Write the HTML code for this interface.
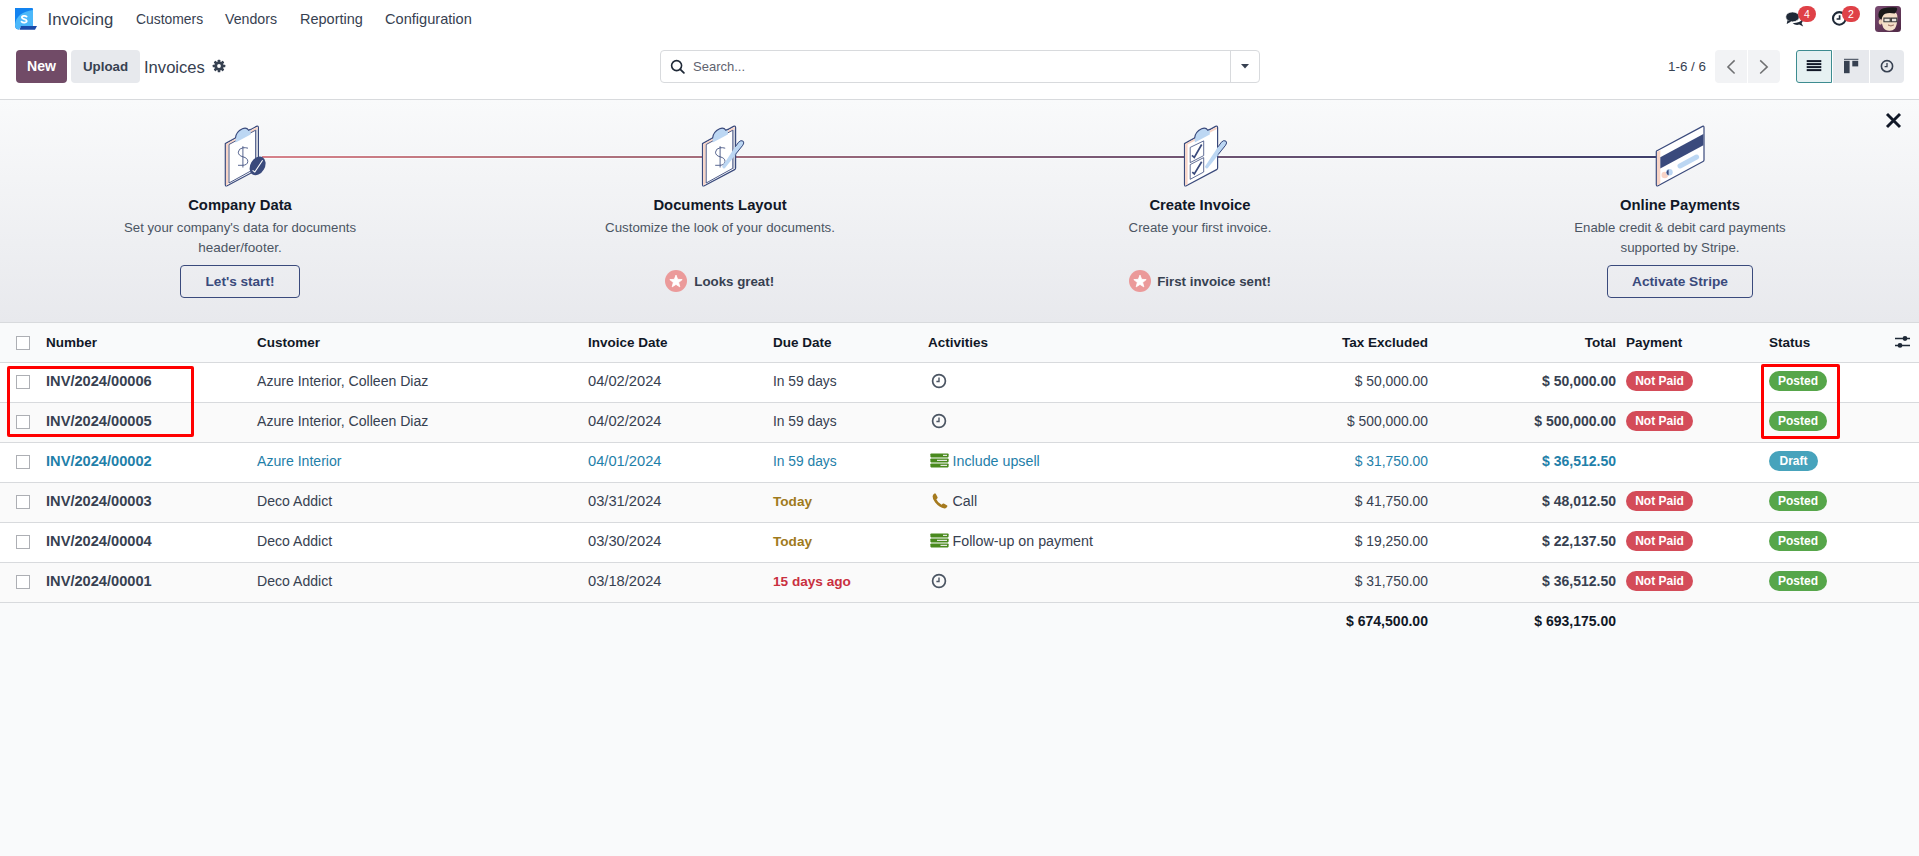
<!DOCTYPE html>
<html><head><meta charset="utf-8"><title>Invoices</title>
<style>
html,body{margin:0;padding:0;}
body{width:1919px;height:856px;position:relative;overflow:hidden;background:#f9fafb;font-family:'Liberation Sans', sans-serif;}
.t{position:absolute;white-space:nowrap;font-family:'Liberation Sans', sans-serif;}
</style></head><body>
<div style="position:absolute;left:0;top:0;width:1919px;height:100px;background:#fff"></div>
<svg style="position:absolute;left:15px;top:8px" width="23" height="23" viewBox="0 0 23 23">
<path d="M0,0 H17 Q18,0 18,1 V18 H8 Q5,18 4,21.6 Q0,21 0,18 Z" fill="#1283f0"/>
<path d="M0,16 Q2,4 18,2 V18 H8 Q5,18 4,21.6 Q0,21 0,17 Z" fill="#4cb8fa"/>
<path d="M6,18 H22 L20,21.8 H4.5 Z" fill="#1a4aa8"/>
<path d="M11.6,8.6 C10.4,7.5 6.8,7.6 6.9,9.6 C7.1,11.3 11.5,10.9 11.7,12.9 C11.9,14.9 7.9,15.1 6.5,13.7" fill="none" stroke="#fff" stroke-width="1.8" stroke-linecap="round"/>
</svg>
<div class="t" style="left:47.5px;top:12px;font-size:16.7px;line-height:16.7px;color:#374151;">Invoicing</div>
<div class="t" style="left:136px;top:13px;font-size:13.9px;line-height:13.9px;color:#374151;">Customers</div>
<div class="t" style="left:225px;top:12px;font-size:14.2px;line-height:14.2px;color:#374151;">Vendors</div>
<div class="t" style="left:300px;top:12px;font-size:14.5px;line-height:14.5px;color:#374151;">Reporting</div>
<div class="t" style="left:385px;top:12px;font-size:14.6px;line-height:14.6px;color:#374151;">Configuration</div>
<svg style="position:absolute;left:1785px;top:10px" width="20" height="18" viewBox="0 0 20 18">
<path d="M7.6,13.2 Q10.5,15.6 14.2,14.6 L18.2,16.4 L16.6,13.2 Q18.6,11.2 17.6,8.6 Q15.4,13.2 7.6,13.2 Z" fill="#1f2937"/>
<ellipse cx="7.5" cy="6.9" rx="6.8" ry="5" fill="#1f2937" stroke="#fff" stroke-width="0.8"/>
<path d="M2.6,10.2 L1.6,14 L6.4,11.6 Z" fill="#1f2937"/>
</svg>
<div style="position:absolute;left:1798px;top:6px;width:18px;height:16px;border-radius:8px;background:#df4147;color:#fff;font-size:10.5px;line-height:16px;text-align:center;font-family:'Liberation Sans', sans-serif">4</div>
<svg style="position:absolute;left:1831px;top:10px" width="17" height="17" viewBox="0 0 17 17">
<circle cx="8.3" cy="8.4" r="6.3" fill="none" stroke="#1f2937" stroke-width="2.1"/>
<path d="M8.6,5.2 V9 H5.6" fill="none" stroke="#1f2937" stroke-width="1.7"/>
</svg>
<div style="position:absolute;left:1842px;top:6px;width:18px;height:16px;border-radius:8px;background:#df4147;color:#fff;font-size:10.5px;line-height:16px;text-align:center;font-family:'Liberation Sans', sans-serif">2</div>
<svg style="position:absolute;left:1875px;top:6px" width="26" height="26" viewBox="0 0 26 26">
<defs><linearGradient id="av" x1="0" y1="0" x2="1" y2="1"><stop offset="0" stop-color="#7a4c72"/><stop offset="1" stop-color="#4f2845"/></linearGradient>
<linearGradient id="sk" x1="0" y1="0" x2="0" y2="1"><stop offset="0" stop-color="#f3dcc4"/><stop offset="1" stop-color="#f6e2cc"/></linearGradient></defs>
<rect x="0" y="0" width="26" height="26" rx="3.5" fill="url(#av)"/>
<ellipse cx="5.4" cy="16" rx="1.7" ry="2.8" fill="#edcfb4"/>
<path d="M6.4,9 Q6.2,5.5 10,5.5 L19.8,6.2 Q22.6,7 22.4,12 Q22.2,19 20,22.4 Q17.6,25 14.2,24.8 Q10.4,24.6 8.2,21.4 Q6.4,18 6.4,9 Z" fill="url(#sk)"/>
<path d="M3.4,8.4 Q4,3 8.6,2.2 Q14.6,0.8 21.4,1.4 Q22.8,2.2 21.8,4.6 Q21.2,6.4 19.6,7.6 Q14,6.2 10.2,7.8 Q7.6,9 6.6,13.4 Q5.4,12.6 5.2,13 Q3,11.4 3.4,8.4 Z" fill="#1a1a1a"/>
<path d="M8.9,12.1 H15.2 V15.7 H8.9 Z M16.4,12.1 H21.8 V15.7 H16.4 Z" fill="#e8e4de" stroke="#3a3a3a" stroke-width="1.1"/>
<path d="M13,19 Q15.8,21.2 18.8,19 Q16,20 13,19 Z" fill="#fff" stroke="#9b6a5a" stroke-width="0.7"/>
</svg>
<div style="position:absolute;left:16px;top:50px;width:51px;height:33px;background:#714b67;border-radius:4px"></div>
<div class="t" style="left:-258.5px;width:600px;text-align:center;top:59px;font-size:14.1px;line-height:14.1px;font-weight:700;color:#fff;">New</div>
<div style="position:absolute;left:71px;top:50px;width:69px;height:33px;background:#e7e9ed;border-radius:4px"></div>
<div class="t" style="left:-194.5px;width:600px;text-align:center;top:60px;font-size:13.3px;line-height:13.3px;font-weight:700;color:#374151;">Upload</div>
<div class="t" style="left:144px;top:60px;font-size:16.6px;line-height:16.6px;color:#374151;">Invoices</div>
<svg style="position:absolute;left:212px;top:59px" width="14" height="14" viewBox="0 0 14 14">
<g fill="#374151" transform="translate(7,7)">
<circle r="4.6"/>
<rect x="-1.3" y="-6.3" width="2.6" height="12.6" rx="0.6"/>
<rect x="-1.3" y="-6.3" width="2.6" height="12.6" rx="0.6" transform="rotate(45)"/>
<rect x="-1.3" y="-6.3" width="2.6" height="12.6" rx="0.6" transform="rotate(90)"/>
<rect x="-1.3" y="-6.3" width="2.6" height="12.6" rx="0.6" transform="rotate(135)"/>
</g><circle cx="7" cy="7" r="1.9" fill="#fff"/>
</svg>
<div style="position:absolute;left:660px;top:50px;width:598px;height:31px;border:1px solid #d8dadd;border-radius:4px;background:#fff"></div>
<div style="position:absolute;left:1230px;top:51px;width:1px;height:31px;background:#d8dadd"></div>
<svg style="position:absolute;left:670px;top:59px" width="16" height="16" viewBox="0 0 16 16">
<circle cx="6.6" cy="6.6" r="5" fill="none" stroke="#1f2937" stroke-width="1.6"/>
<path d="M10.3,10.3 L13.9,13.9" stroke="#1f2937" stroke-width="1.8" stroke-linecap="round"/>
</svg>
<div class="t" style="left:693px;top:60px;font-size:13.0px;line-height:13.0px;color:#5f636f;">Search...</div>
<svg style="position:absolute;left:1241px;top:64px" width="8" height="5" viewBox="0 0 8 5"><path d="M0,0 H8 L4,4.5 Z" fill="#374151"/></svg>
<div class="t" style="left:1668px;top:60px;font-size:13.4px;line-height:13.4px;color:#374151;">1-6 / 6</div>
<div style="position:absolute;left:1715px;top:50px;width:65px;height:33px;background:#f2f3f5;border-radius:4px"></div>
<div style="position:absolute;left:1747px;top:50px;width:1px;height:33px;background:#fff"></div>
<svg style="position:absolute;left:1723px;top:57px" width="50" height="20" viewBox="0 0 50 20">
<path d="M11.6,3.4 L4.9,9.9 L11.6,16.5" fill="none" stroke="#6f7072" stroke-width="1.5"/>
<path d="M37.2,3.4 L44.2,9.9 L37.2,16.5" fill="none" stroke="#6f7072" stroke-width="1.5"/>
</svg>
<div style="position:absolute;left:1833px;top:50px;width:36px;height:33px;background:#e7e9ed"></div>
<div style="position:absolute;left:1870px;top:50px;width:34px;height:33px;background:#e7e9ed;border-radius:0 4px 4px 0"></div>
<div style="position:absolute;left:1796px;top:50px;width:34px;height:31px;background:#e6f1f2;border:1px solid #3d8c90;border-radius:3px 0 0 3px"></div>
<svg style="position:absolute;left:1796px;top:50px" width="108" height="33" viewBox="0 0 108 33">
<g fill="#111827"><rect x="10.7" y="10.1" width="14.6" height="2"/><rect x="10.7" y="13.1" width="14.6" height="2"/><rect x="10.7" y="16.1" width="14.6" height="2"/><rect x="10.7" y="19.1" width="14.6" height="2"/></g>
<g fill="#374151"><rect x="48" y="8.8" width="14.4" height="1"/><rect x="48" y="10.8" width="5.6" height="12.4"/><rect x="56.3" y="10.8" width="5.9" height="5.6"/></g>
<circle cx="91" cy="16.2" r="5.6" fill="none" stroke="#374151" stroke-width="1.6"/>
<path d="M91,13 V16.6 H88.6" fill="none" stroke="#374151" stroke-width="1.3"/>
</svg>
<div style="position:absolute;left:0px;top:99px;width:1919px;height:1px;background:#d8dadd"></div>
<div style="position:absolute;left:0px;top:100px;width:1919px;height:222px;background:linear-gradient(#f9fafb,#e8e9ed)"></div>
<div style="position:absolute;left:0px;top:322px;width:1919px;height:1px;background:#d8dadd"></div>
<svg style="position:absolute;left:1884px;top:111px" width="19" height="19" viewBox="0 0 19 19">
<path d="M3,3 L16,16 M16,3 L3,16" stroke="#111827" stroke-width="2.9"/>
</svg>
<svg style="position:absolute;left:0;top:100px" width="1919" height="222" viewBox="0 100 1919 222"><defs><linearGradient id="lg" x1="265" y1="0" x2="1656" y2="0" gradientUnits="userSpaceOnUse"><stop offset="0" stop-color="#d6818a"/><stop offset="0.137" stop-color="#c07880"/><stop offset="0.266" stop-color="#ab707c"/><stop offset="0.467" stop-color="#8e6278"/><stop offset="0.812" stop-color="#5a4a6e"/><stop offset="1" stop-color="#3f3f6b"/></linearGradient></defs><rect x="262" y="155" width="1396" height="4" fill="#f9fcfd"/><rect x="262" y="156" width="1396" height="2" fill="url(#lg)"/><g transform="translate(-477.2,0)"><path d="M702.5,143.6 L733.6,126.4 Q735.6,125.4 735.6,127.6 V168 Q735.6,169.1 734.6,169.6 L704.3,185.7 Q702.5,186.6 702.5,184.6 Z" fill="#fff" stroke="#3a4a7c" stroke-width="1.2" stroke-linejoin="round"/><path d="M703.2,143.9 L734.8,126.7 V128.9 L705.6,144.6 V184.2 L703.2,185.4 Z" fill="#f8d4c6"/><path d="M733,130 L734.9,129 V168.3 L733,169.3 Z" fill="#c9cdd9"/><path d="M706.2,144.5 L732.8,130.2 V168.3 L706.2,183 Z" fill="#fff" stroke="#3a4a7c" stroke-width="0.9"/><path d="M712.8,141.8 V136.8 Q713.2,131.4 719.6,128.7 Q723.6,127.2 725.6,130.3 L727.8,129.1 V134.4 L712.8,142.6 Z" fill="#bcd7f3"/><path d="M712.6,138.2 Q713,132 719.6,128.8 Q723.8,127 725.8,130.3 L728,129.2" fill="none" stroke="#3a4a7c" stroke-width="1.1"/><path d="M725.2,148.2 Q722.5,147.4 720,147.8 Q715.8,148.6 715.5,152.2 Q715.6,155.6 720.1,156.8 Q725,158 725,161.4 Q724.8,165.2 719.6,165.3 H715.2" fill="none" stroke="#3a4a7c" stroke-width="0.85"/><path d="M720.1,146.2 V167.5" stroke="#3a4a7c" stroke-width="0.85"/></g><ellipse cx="257.6" cy="165.9" rx="7.2" ry="10" transform="rotate(30 257.6 165.9)" fill="#3a4a7c"/><path d="M252.6,170.4 L254.8,172 L262.6,160.2" fill="none" stroke="#fff" stroke-width="1.1"/><g transform="translate(0,0)"><path d="M702.5,143.6 L733.6,126.4 Q735.6,125.4 735.6,127.6 V168 Q735.6,169.1 734.6,169.6 L704.3,185.7 Q702.5,186.6 702.5,184.6 Z" fill="#fff" stroke="#3a4a7c" stroke-width="1.2" stroke-linejoin="round"/><path d="M703.2,143.9 L734.8,126.7 V128.9 L705.6,144.6 V184.2 L703.2,185.4 Z" fill="#f8d4c6"/><path d="M733,130 L734.9,129 V168.3 L733,169.3 Z" fill="#c9cdd9"/><path d="M706.2,144.5 L732.8,130.2 V168.3 L706.2,183 Z" fill="#fff" stroke="#3a4a7c" stroke-width="0.9"/><path d="M712.8,141.8 V136.8 Q713.2,131.4 719.6,128.7 Q723.6,127.2 725.6,130.3 L727.8,129.1 V134.4 L712.8,142.6 Z" fill="#bcd7f3"/><path d="M712.6,138.2 Q713,132 719.6,128.8 Q723.8,127 725.8,130.3 L728,129.2" fill="none" stroke="#3a4a7c" stroke-width="1.1"/><path d="M725.2,148.2 Q722.5,147.4 720,147.8 Q715.8,148.6 715.5,152.2 Q715.6,155.6 720.1,156.8 Q725,158 725,161.4 Q724.8,165.2 719.6,165.3 H715.2" fill="none" stroke="#3a4a7c" stroke-width="0.85"/><path d="M720.1,146.2 V167.5" stroke="#3a4a7c" stroke-width="0.85"/><path d="M722.2,166.4 L738.6,141.8 Q741.2,139.2 743.4,141.2 Q744.8,143 743,145.4 L725,168 Q723,169.6 722.2,166.4 Z" fill="#bcd7f3"/><path d="M735.3,146.8 L738.6,142.2 Q741,139.6 743.2,141.2 Q744.6,142.8 742.8,145.2 L735.3,154.6" fill="none" stroke="#3a4a7c" stroke-width="1"/></g><g transform="translate(482,0)"><path d="M702.5,143.6 L733.6,126.4 Q735.6,125.4 735.6,127.6 V168 Q735.6,169.1 734.6,169.6 L704.3,185.7 Q702.5,186.6 702.5,184.6 Z" fill="#fff" stroke="#3a4a7c" stroke-width="1.2" stroke-linejoin="round"/><path d="M703.2,143.9 L734.8,126.7 V128.9 L705.6,144.6 V184.2 L703.2,185.4 Z" fill="#f8d4c6"/><path d="M712.8,141.8 V136.8 Q713.2,131.4 719.6,128.7 Q723.6,127.2 725.6,130.3 L727.8,129.1 V134.4 L712.8,142.6 Z" fill="#bcd7f3"/><path d="M712.6,138.2 Q713,132 719.6,128.8 Q723.8,127 725.8,130.3 L728,129.2" fill="none" stroke="#3a4a7c" stroke-width="1.1"/><path d="M708.2,147.4 L721.7,140.9 V155.6 L708.2,162.6 Z M708.2,164.6 L721.7,157.6 V172 L708.2,179.3 Z" fill="#fff" stroke="#3a4a7c" stroke-width="0.8"/><path d="M709.9,155.4 L712.3,157.4 L719.7,144.5 M710.3,172.2 L712.3,174 L719.7,161.7" fill="none" stroke="#3a4a7c" stroke-width="1.7"/><g transform="translate(0.8,0)"><path d="M722.2,166.4 L738.6,141.8 Q741.2,139.2 743.4,141.2 Q744.8,143 743,145.4 L725,168 Q723,169.6 722.2,166.4 Z" fill="#bcd7f3"/><path d="M735.3,146.8 L738.6,142.2 Q741,139.6 743.2,141.2 Q744.6,142.8 742.8,145.2 L735.3,154.6" fill="none" stroke="#3a4a7c" stroke-width="1"/></g></g><path d="M1656.5,151 L1702.5,126.4 Q1704,125.7 1704,127.5 V160 Q1704,161 1703,161.5 L1658,185.7 Q1656.3,186.5 1656.3,184.6 V152 Q1656.3,151.3 1656.5,151 Z" fill="#fff" stroke="#3a4a7c" stroke-width="1.2" stroke-linejoin="round"/><path d="M1657,152 L1660.3,150.3 V183.8 L1657,185.5 Z" fill="#f8d4c6"/><path d="M1660.3,157.2 L1703.4,134 V145.2 L1660.3,168.6 Z" fill="#3a4a7c"/><path d="M1680,166 L1696.6,157" stroke="#bcd7f3" stroke-width="5" stroke-linecap="round"/><circle cx="1664.8" cy="175" r="3.3" fill="#f8d4c6"/><circle cx="1669.4" cy="172.3" r="3.3" fill="#bcd7f3"/><path d="M1668.6,169.4 A3.2,3.2 0 0 0 1668.6,175.4 Z" fill="#3a4a7c"/></svg>
<div class="t" style="left:-60px;width:600px;text-align:center;top:198px;font-size:14.8px;line-height:14.8px;font-weight:700;color:#111827;">Company Data</div>
<div class="t" style="left:420px;width:600px;text-align:center;top:198px;font-size:14.8px;line-height:14.8px;font-weight:700;color:#111827;">Documents Layout</div>
<div class="t" style="left:900px;width:600px;text-align:center;top:198px;font-size:14.8px;line-height:14.8px;font-weight:700;color:#111827;">Create Invoice</div>
<div class="t" style="left:1380px;width:600px;text-align:center;top:198px;font-size:14.8px;line-height:14.8px;font-weight:700;color:#111827;">Online Payments</div>
<div class="t" style="left:-60px;width:600px;text-align:center;top:221px;font-size:13.2px;line-height:13.2px;color:#4b5563;">Set your company's data for documents</div>
<div class="t" style="left:-60px;width:600px;text-align:center;top:241px;font-size:13.5px;line-height:13.5px;color:#4b5563;">header/footer.</div>
<div class="t" style="left:420px;width:600px;text-align:center;top:221px;font-size:13.3px;line-height:13.3px;color:#4b5563;">Customize the look of your documents.</div>
<div class="t" style="left:900px;width:600px;text-align:center;top:221px;font-size:13.26px;line-height:13.26px;color:#4b5563;">Create your first invoice.</div>
<div class="t" style="left:1380px;width:600px;text-align:center;top:221px;font-size:13.17px;line-height:13.17px;color:#4b5563;">Enable credit &amp; debit card payments</div>
<div class="t" style="left:1380px;width:600px;text-align:center;top:241px;font-size:13.3px;line-height:13.3px;color:#4b5563;">supported by Stripe.</div>
<div style="position:absolute;left:180px;top:265px;width:118px;height:31px;border:1px solid #3a4a7c;border-radius:4px"></div>
<div class="t" style="left:-60px;width:600px;text-align:center;top:275px;font-size:13.6px;line-height:13.6px;font-weight:700;color:#3a4a7c;">Let's start!</div>
<div style="position:absolute;left:1607px;top:265px;width:144px;height:31px;border:1px solid #3a4a7c;border-radius:4px"></div>
<div class="t" style="left:1380px;width:600px;text-align:center;top:275px;font-size:13.7px;line-height:13.7px;font-weight:700;color:#3a4a7c;">Activate Stripe</div>
<svg style="position:absolute;left:664.7px;top:270px" width="22" height="22" viewBox="664.7 270 22 22"><circle cx="675.7" cy="281" r="11" fill="#eb9a9a"/><polygon points="675.70,275.10 677.35,279.33 681.88,279.59 678.36,282.47 679.52,286.86 675.70,284.40 671.88,286.86 673.04,282.47 669.52,279.59 674.05,279.33" fill="#fff" stroke="#fff" stroke-width="0.8" stroke-linejoin="round"/></svg>
<div class="t" style="left:694.3px;top:275px;font-size:13.3px;line-height:13.3px;font-weight:700;color:#374151;">Looks great!</div>
<svg style="position:absolute;left:1128.5px;top:270px" width="22" height="22" viewBox="1128.5 270 22 22"><circle cx="1139.5" cy="281" r="11" fill="#eb9a9a"/><polygon points="1139.50,275.10 1141.15,279.33 1145.68,279.59 1142.16,282.47 1143.32,286.86 1139.50,284.40 1135.68,286.86 1136.84,282.47 1133.32,279.59 1137.85,279.33" fill="#fff" stroke="#fff" stroke-width="0.8" stroke-linejoin="round"/></svg>
<div class="t" style="left:1157.2px;top:275px;font-size:13.3px;line-height:13.3px;font-weight:700;color:#374151;">First invoice sent!</div>
<div style="position:absolute;left:0px;top:323px;width:1919px;height:533px;background:#f9fafb"></div>
<div style="position:absolute;left:0px;top:362px;width:1919px;height:1px;background:#d8dadd"></div>
<div style="position:absolute;left:16px;top:336px;width:12px;height:12px;background:#fff;border:1px solid #adafb4"></div>
<div class="t" style="left:46px;top:336px;font-size:13.5px;line-height:13.5px;font-weight:700;color:#111827;">Number</div>
<div class="t" style="left:257px;top:336px;font-size:13.5px;line-height:13.5px;font-weight:700;color:#111827;">Customer</div>
<div class="t" style="left:588px;top:336px;font-size:13.5px;line-height:13.5px;font-weight:700;color:#111827;">Invoice Date</div>
<div class="t" style="left:773px;top:336px;font-size:13.5px;line-height:13.5px;font-weight:700;color:#111827;">Due Date</div>
<div class="t" style="left:928px;top:336px;font-size:13.5px;line-height:13.5px;font-weight:700;color:#111827;">Activities</div>
<div class="t" style="right:491px;text-align:right;top:336px;font-size:13.5px;line-height:13.5px;font-weight:700;color:#111827;">Tax Excluded</div>
<div class="t" style="right:303px;text-align:right;top:336px;font-size:13.5px;line-height:13.5px;font-weight:700;color:#111827;">Total</div>
<div class="t" style="left:1626px;top:336px;font-size:13.5px;line-height:13.5px;font-weight:700;color:#111827;">Payment</div>
<div class="t" style="left:1769px;top:336px;font-size:13.5px;line-height:13.5px;font-weight:700;color:#111827;">Status</div>
<svg style="position:absolute;left:1893px;top:334px" width="19" height="15" viewBox="0 0 19 15">
<path d="M2,4.5 H17 M2,11.4 H17" stroke="#1f2937" stroke-width="1.5"/>
<circle cx="12" cy="4.5" r="2.4" fill="#1f2937"/><circle cx="7" cy="11.4" r="2.4" fill="#1f2937"/>
</svg>
<div style="position:absolute;left:0px;top:363px;width:1919px;height:39px;background:#ffffff"></div>
<div style="position:absolute;left:0px;top:402px;width:1919px;height:1px;background:#d8dadd"></div>
<div style="position:absolute;left:16px;top:375px;width:12px;height:12px;background:#fff;border:1px solid #adafb4"></div>
<div class="t" style="left:46px;top:374px;font-size:14.63px;line-height:14.63px;font-weight:700;color:#374151;">INV/2024/00006</div>
<div class="t" style="left:257px;top:374px;font-size:14.09px;line-height:14.09px;color:#374151;">Azure Interior, Colleen Diaz</div>
<div class="t" style="left:588px;top:374px;font-size:14.69px;line-height:14.69px;color:#374151;">04/02/2024</div>
<div class="t" style="left:773px;top:375px;font-size:13.8px;line-height:13.8px;color:#374151;">In 59 days</div>
<svg style="position:absolute;left:931px;top:373px" width="16" height="16" viewBox="0 0 16 16"><circle cx="8" cy="8" r="6.4" fill="none" stroke="#4b5563" stroke-width="1.7"/><path d="M8,4.6 V8.5 H5.4" fill="none" stroke="#4b5563" stroke-width="1.4"/></svg>
<div class="t" style="right:491px;text-align:right;top:375px;font-size:13.87px;line-height:13.87px;color:#374151;">$ 50,000.00</div>
<div class="t" style="right:303px;text-align:right;top:374px;font-size:13.99px;line-height:13.99px;font-weight:700;color:#374151;">$ 50,000.00</div>
<div style="position:absolute;left:1626px;top:371px;width:67px;height:20px;background:#d44c59;border-radius:10px"></div>
<div class="t" style="left:1359.5px;width:600px;text-align:center;top:375px;font-size:12.0px;line-height:12.0px;font-weight:700;color:#fff;">Not Paid</div>
<div style="position:absolute;left:1769px;top:371px;width:58px;height:20px;background:#56a64a;border-radius:10px"></div>
<div class="t" style="left:1498.0px;width:600px;text-align:center;top:375px;font-size:12.0px;line-height:12.0px;font-weight:700;color:#fff;">Posted</div>
<div style="position:absolute;left:0px;top:403px;width:1919px;height:39px;background:#fafafa"></div>
<div style="position:absolute;left:0px;top:442px;width:1919px;height:1px;background:#d8dadd"></div>
<div style="position:absolute;left:16px;top:415px;width:12px;height:12px;background:#fff;border:1px solid #adafb4"></div>
<div class="t" style="left:46px;top:414px;font-size:14.63px;line-height:14.63px;font-weight:700;color:#374151;">INV/2024/00005</div>
<div class="t" style="left:257px;top:414px;font-size:14.09px;line-height:14.09px;color:#374151;">Azure Interior, Colleen Diaz</div>
<div class="t" style="left:588px;top:414px;font-size:14.69px;line-height:14.69px;color:#374151;">04/02/2024</div>
<div class="t" style="left:773px;top:415px;font-size:13.8px;line-height:13.8px;color:#374151;">In 59 days</div>
<svg style="position:absolute;left:931px;top:413px" width="16" height="16" viewBox="0 0 16 16"><circle cx="8" cy="8" r="6.4" fill="none" stroke="#4b5563" stroke-width="1.7"/><path d="M8,4.6 V8.5 H5.4" fill="none" stroke="#4b5563" stroke-width="1.4"/></svg>
<div class="t" style="right:491px;text-align:right;top:415px;font-size:13.87px;line-height:13.87px;color:#374151;">$ 500,000.00</div>
<div class="t" style="right:303px;text-align:right;top:414px;font-size:13.99px;line-height:13.99px;font-weight:700;color:#374151;">$ 500,000.00</div>
<div style="position:absolute;left:1626px;top:411px;width:67px;height:20px;background:#d44c59;border-radius:10px"></div>
<div class="t" style="left:1359.5px;width:600px;text-align:center;top:415px;font-size:12.0px;line-height:12.0px;font-weight:700;color:#fff;">Not Paid</div>
<div style="position:absolute;left:1769px;top:411px;width:58px;height:20px;background:#56a64a;border-radius:10px"></div>
<div class="t" style="left:1498.0px;width:600px;text-align:center;top:415px;font-size:12.0px;line-height:12.0px;font-weight:700;color:#fff;">Posted</div>
<div style="position:absolute;left:0px;top:443px;width:1919px;height:39px;background:#ffffff"></div>
<div style="position:absolute;left:0px;top:482px;width:1919px;height:1px;background:#d8dadd"></div>
<div style="position:absolute;left:16px;top:455px;width:12px;height:12px;background:#fff;border:1px solid #adafb4"></div>
<div class="t" style="left:46px;top:454px;font-size:14.63px;line-height:14.63px;font-weight:700;color:#1f80a9;">INV/2024/00002</div>
<div class="t" style="left:257px;top:454px;font-size:14.09px;line-height:14.09px;color:#1f80a9;">Azure Interior</div>
<div class="t" style="left:588px;top:454px;font-size:14.69px;line-height:14.69px;color:#1f80a9;">04/01/2024</div>
<div class="t" style="left:773px;top:455px;font-size:13.8px;line-height:13.8px;color:#1f80a9;">In 59 days</div>
<svg style="position:absolute;left:930px;top:453px" width="19" height="15" viewBox="0 0 19 15"><g fill="#4a8a1e"><rect x="0.4" y="0.4" width="18.2" height="4" rx="0.8"/><rect x="0.4" y="5.4" width="18.2" height="4" rx="0.8"/><rect x="0.4" y="10.4" width="18.2" height="4" rx="0.8"/></g><g fill="#e2e6df"><rect x="13" y="1.8" width="4" height="1.2"/><rect x="7" y="6.8" width="10" height="1.2"/><rect x="10.5" y="11.8" width="6.5" height="1.2"/></g></svg>
<div class="t" style="left:952.5px;top:454px;font-size:14.28px;line-height:14.28px;color:#1f80a9;">Include upsell</div>
<div class="t" style="right:491px;text-align:right;top:455px;font-size:13.87px;line-height:13.87px;color:#1f80a9;">$ 31,750.00</div>
<div class="t" style="right:303px;text-align:right;top:454px;font-size:13.99px;line-height:13.99px;font-weight:700;color:#1f80a9;">$ 36,512.50</div>
<div style="position:absolute;left:1769px;top:451px;width:49px;height:20px;background:#47a3bc;border-radius:10px"></div>
<div class="t" style="left:1493.5px;width:600px;text-align:center;top:455px;font-size:12.0px;line-height:12.0px;font-weight:700;color:#fff;">Draft</div>
<div style="position:absolute;left:0px;top:483px;width:1919px;height:39px;background:#fafafa"></div>
<div style="position:absolute;left:0px;top:522px;width:1919px;height:1px;background:#d8dadd"></div>
<div style="position:absolute;left:16px;top:495px;width:12px;height:12px;background:#fff;border:1px solid #adafb4"></div>
<div class="t" style="left:46px;top:494px;font-size:14.63px;line-height:14.63px;font-weight:700;color:#374151;">INV/2024/00003</div>
<div class="t" style="left:257px;top:494px;font-size:14.09px;line-height:14.09px;color:#374151;">Deco Addict</div>
<div class="t" style="left:588px;top:494px;font-size:14.69px;line-height:14.69px;color:#374151;">03/31/2024</div>
<div class="t" style="left:773px;top:495px;font-size:13.6px;line-height:13.6px;font-weight:700;color:#a07a1c;">Today</div>
<svg style="position:absolute;left:931.5px;top:493px" width="16" height="16" viewBox="0 0 16 16"><path d="M3.6,0.6 L5.6,4.3 Q5.9,5.2 5,5.8 L4.3,6.3 Q5.8,9.8 9.6,11.8 L10.3,11.1 Q10.9,10.3 11.8,10.6 L15.2,12.6 Q15.6,13.2 15.2,13.8 Q14,15.6 12.6,15.4 Q7.2,14.6 3.2,9.6 Q0.4,6 0.6,3.2 Q0.8,1.6 2.4,0.6 Q3,0.2 3.6,0.6 Z" fill="#a57a1e"/></svg>
<div class="t" style="left:952.5px;top:494px;font-size:14.28px;line-height:14.28px;color:#374151;">Call</div>
<div class="t" style="right:491px;text-align:right;top:495px;font-size:13.87px;line-height:13.87px;color:#374151;">$ 41,750.00</div>
<div class="t" style="right:303px;text-align:right;top:494px;font-size:13.99px;line-height:13.99px;font-weight:700;color:#374151;">$ 48,012.50</div>
<div style="position:absolute;left:1626px;top:491px;width:67px;height:20px;background:#d44c59;border-radius:10px"></div>
<div class="t" style="left:1359.5px;width:600px;text-align:center;top:495px;font-size:12.0px;line-height:12.0px;font-weight:700;color:#fff;">Not Paid</div>
<div style="position:absolute;left:1769px;top:491px;width:58px;height:20px;background:#56a64a;border-radius:10px"></div>
<div class="t" style="left:1498.0px;width:600px;text-align:center;top:495px;font-size:12.0px;line-height:12.0px;font-weight:700;color:#fff;">Posted</div>
<div style="position:absolute;left:0px;top:523px;width:1919px;height:39px;background:#ffffff"></div>
<div style="position:absolute;left:0px;top:562px;width:1919px;height:1px;background:#d8dadd"></div>
<div style="position:absolute;left:16px;top:535px;width:12px;height:12px;background:#fff;border:1px solid #adafb4"></div>
<div class="t" style="left:46px;top:534px;font-size:14.63px;line-height:14.63px;font-weight:700;color:#374151;">INV/2024/00004</div>
<div class="t" style="left:257px;top:534px;font-size:14.09px;line-height:14.09px;color:#374151;">Deco Addict</div>
<div class="t" style="left:588px;top:534px;font-size:14.69px;line-height:14.69px;color:#374151;">03/30/2024</div>
<div class="t" style="left:773px;top:535px;font-size:13.6px;line-height:13.6px;font-weight:700;color:#a07a1c;">Today</div>
<svg style="position:absolute;left:930px;top:533px" width="19" height="15" viewBox="0 0 19 15"><g fill="#4a8a1e"><rect x="0.4" y="0.4" width="18.2" height="4" rx="0.8"/><rect x="0.4" y="5.4" width="18.2" height="4" rx="0.8"/><rect x="0.4" y="10.4" width="18.2" height="4" rx="0.8"/></g><g fill="#e2e6df"><rect x="13" y="1.8" width="4" height="1.2"/><rect x="7" y="6.8" width="10" height="1.2"/><rect x="10.5" y="11.8" width="6.5" height="1.2"/></g></svg>
<div class="t" style="left:952.5px;top:534px;font-size:14.28px;line-height:14.28px;color:#374151;">Follow-up on payment</div>
<div class="t" style="right:491px;text-align:right;top:535px;font-size:13.87px;line-height:13.87px;color:#374151;">$ 19,250.00</div>
<div class="t" style="right:303px;text-align:right;top:534px;font-size:13.99px;line-height:13.99px;font-weight:700;color:#374151;">$ 22,137.50</div>
<div style="position:absolute;left:1626px;top:531px;width:67px;height:20px;background:#d44c59;border-radius:10px"></div>
<div class="t" style="left:1359.5px;width:600px;text-align:center;top:535px;font-size:12.0px;line-height:12.0px;font-weight:700;color:#fff;">Not Paid</div>
<div style="position:absolute;left:1769px;top:531px;width:58px;height:20px;background:#56a64a;border-radius:10px"></div>
<div class="t" style="left:1498.0px;width:600px;text-align:center;top:535px;font-size:12.0px;line-height:12.0px;font-weight:700;color:#fff;">Posted</div>
<div style="position:absolute;left:0px;top:563px;width:1919px;height:39px;background:#fafafa"></div>
<div style="position:absolute;left:0px;top:602px;width:1919px;height:1px;background:#d8dadd"></div>
<div style="position:absolute;left:16px;top:575px;width:12px;height:12px;background:#fff;border:1px solid #adafb4"></div>
<div class="t" style="left:46px;top:574px;font-size:14.63px;line-height:14.63px;font-weight:700;color:#374151;">INV/2024/00001</div>
<div class="t" style="left:257px;top:574px;font-size:14.09px;line-height:14.09px;color:#374151;">Deco Addict</div>
<div class="t" style="left:588px;top:574px;font-size:14.69px;line-height:14.69px;color:#374151;">03/18/2024</div>
<div class="t" style="left:773px;top:575px;font-size:13.6px;line-height:13.6px;font-weight:700;color:#c9303f;">15 days ago</div>
<svg style="position:absolute;left:931px;top:573px" width="16" height="16" viewBox="0 0 16 16"><circle cx="8" cy="8" r="6.4" fill="none" stroke="#4b5563" stroke-width="1.7"/><path d="M8,4.6 V8.5 H5.4" fill="none" stroke="#4b5563" stroke-width="1.4"/></svg>
<div class="t" style="right:491px;text-align:right;top:575px;font-size:13.87px;line-height:13.87px;color:#374151;">$ 31,750.00</div>
<div class="t" style="right:303px;text-align:right;top:574px;font-size:13.99px;line-height:13.99px;font-weight:700;color:#374151;">$ 36,512.50</div>
<div style="position:absolute;left:1626px;top:571px;width:67px;height:20px;background:#d44c59;border-radius:10px"></div>
<div class="t" style="left:1359.5px;width:600px;text-align:center;top:575px;font-size:12.0px;line-height:12.0px;font-weight:700;color:#fff;">Not Paid</div>
<div style="position:absolute;left:1769px;top:571px;width:58px;height:20px;background:#56a64a;border-radius:10px"></div>
<div class="t" style="left:1498.0px;width:600px;text-align:center;top:575px;font-size:12.0px;line-height:12.0px;font-weight:700;color:#fff;">Posted</div>
<div class="t" style="right:491px;text-align:right;top:614px;font-size:14.05px;line-height:14.05px;font-weight:700;color:#111827;">$ 674,500.00</div>
<div class="t" style="right:303px;text-align:right;top:614px;font-size:13.99px;line-height:13.99px;font-weight:700;color:#111827;">$ 693,175.00</div>
<div style="position:absolute;left:6.5px;top:365.5px;width:181px;height:65.5px;border:3px solid #ff0000;border-radius:2px"></div>
<div style="position:absolute;left:1760.7px;top:364px;width:73.5px;height:69px;border:3px solid #ff0000;border-radius:2px"></div>
</body></html>
